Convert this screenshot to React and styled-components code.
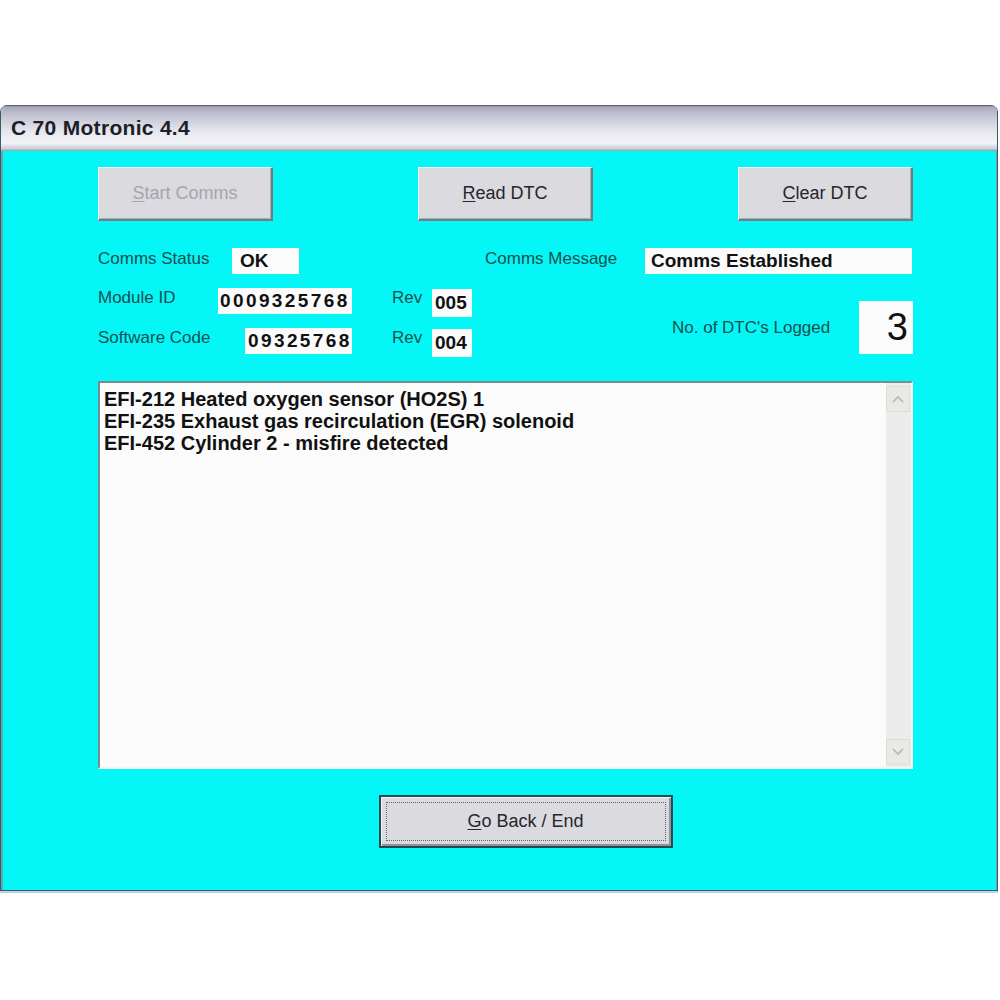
import React from "react";
import styled, { createGlobalStyle } from "styled-components";

const Global = createGlobalStyle`
  body {
    margin: 0;
    background: #ffffff;
    font-family: "Liberation Sans", Arial, sans-serif;
  }
`;

const Page = styled.div`
  width: 1000px;
  height: 1000px;
  padding-top: 105px;
  box-sizing: border-box;
`;

const Window = styled.div`
  width: 998px;
  border: 1px solid #3d5a66;
  border-top: none;
  border-radius: 7px 7px 0 0;
  box-shadow: 0 2px 0 #b9d6e4;
  overflow: hidden;
  box-sizing: border-box;
`;

const TitleBar = styled.div`
  height: 46px;
  display: flex;
  align-items: center;
  padding-left: 10px;
  background: linear-gradient(
    to bottom,
    #4e4e5a 0px,
    #a9abbe 2px,
    #c2c3d2 10px,
    #e6e6ee 26px,
    #f4f4f8 38px,
    #c8ccd4 44px,
    #8a9aa2 46px
  );
  font-weight: bold;
  font-size: 21px;
  color: #1e1e26;
  letter-spacing: 0.3px;
`;

const Body = styled.div`
  background: #05f6f6;
  border-left: 2px solid #5fa9b0;
  border-right: 1px solid #5fa9b0;
  padding: 16px 83px 42px 95px;
  display: flex;
  flex-direction: column;
`;

const ButtonRow = styled.div`
  display: flex;
  justify-content: space-between;
`;

const Button = styled.button`
  width: ${(p) => p.$w || 175}px;
  height: ${(p) => p.$h || 54}px;
  background: #dadadf;
  border: 1px solid #f4f4f6;
  border-right: 2px solid #6e7e84;
  border-bottom: 2px solid #6e7e84;
  box-shadow: inset -1px -1px 0 #a6aeb2;
  font-family: "Liberation Sans", Arial, sans-serif;
  font-size: 18px;
  color: ${(p) => (p.$disabled ? "#a4a6b0" : "#26262c")};
  padding: 0;
  cursor: default;
  u {
    text-decoration-thickness: 1px;
    text-underline-offset: 2px;
  }
`;

const FocusButton = styled(Button)`
  border: 2px solid #234a50;
  box-shadow: inset 1px 1px 0 #f4f4f6, inset -2px -2px 0 #8a969a;
  position: relative;
  &::after {
    content: "";
    position: absolute;
    inset: 5px;
    border: 1px dotted #606870;
  }
`;

const Form = styled.div`
  margin-top: 27px;
  display: flex;
`;

const LeftCol = styled.div`
  width: 388px;
  display: flex;
  flex-direction: column;
  gap: 14px;
`;

const RightCol = styled.div`
  flex: 1;
  display: flex;
  flex-direction: column;
`;

const Row = styled.div`
  display: flex;
  align-items: ${(p) => p.$align || "center"};
  height: 26px;
`;

const Label = styled.div`
  width: ${(p) => p.$w}px;
  flex: none;
  font-size: 17px;
  color: #17504f;
  margin-top: ${(p) => p.$mt || 0}px;
`;

const Field = styled.div`
  width: ${(p) => p.$w}px;
  height: ${(p) => p.$h || 26}px;
  flex: none;
  background: #fbfbfb;
  box-sizing: border-box;
  padding-left: ${(p) => p.$pl ?? 6}px;
  display: flex;
  align-items: center;
  font-weight: bold;
  font-size: 19px;
  color: #111;
  letter-spacing: ${(p) => p.$ls || 0}px;
  margin-top: ${(p) => p.$mt || 0}px;
`;

const RevLabel = styled(Label)`
  margin-left: 40px;
  align-self: flex-start;
`;

const CountRow = styled.div`
  display: flex;
  align-items: center;
  margin-top: 27px;
  padding-left: 187px;
`;

const CountField = styled.div`
  width: 54px;
  height: 53px;
  margin-left: 16px;
  background: #fbfbfb;
  display: flex;
  align-items: center;
  justify-content: flex-end;
  padding-right: 5px;
  box-sizing: border-box;
  font-size: 38px;
  color: #111;
`;

const ListBox = styled.div`
  margin-top: 27px;
  height: 388px;
  display: flex;
  background: #fbfbfb;
  border-top: 2px solid #7d8a90;
  border-left: 2px solid #7d8a90;
  border-right: 2px solid #f0f6f6;
  border-bottom: 2px solid #f0f6f6;
  box-sizing: border-box;
`;

const ListText = styled.div`
  flex: 1;
  padding: 5px 0 0 4px;
  font-weight: bold;
  font-size: 20px;
  line-height: 22px;
  color: #111;
`;

const ScrollBar = styled.div`
  width: 25px;
  background: #ececec;
  display: flex;
  flex-direction: column;
  justify-content: space-between;
  padding: 3px 1px 2px 0;
  box-sizing: border-box;
`;

const ScrollBtn = styled.div`
  height: 24px;
  background: #ebe9e6;
  border: 1px solid #e0ddd8;
  display: flex;
  align-items: center;
  justify-content: center;
`;

const Bottom = styled.div`
  margin-top: 26px;
  display: flex;
  justify-content: center;
  padding-left: 40px;
`;

const Arrow = ({ up }) => (
  <svg width="12" height="8" viewBox="0 0 12 8">
    <path
      d={up ? "M1 7 L6 2 L11 7" : "M1 1 L6 6 L11 1"}
      fill="none"
      stroke="#b8b6b0"
      strokeWidth="1.6"
    />
  </svg>
);

const App = () => (
  <Page>
    <Global />
    <Window>
      <TitleBar>C 70 Motronic 4.4</TitleBar>
      <Body>
        <ButtonRow>
          <Button $disabled>
            <u>S</u>tart Comms
          </Button>
          <Button>
            <u>R</u>ead DTC
          </Button>
          <Button>
            <u>C</u>lear DTC
          </Button>
        </ButtonRow>

        <Form>
          <LeftCol>
            <Row>
              <Label $w={134} $mt={-4}>Comms Status</Label>
              <Field $w={67} $pl={8}>OK</Field>
            </Row>
            <Row $align="flex-start">
              <Label $w={120}>Module ID</Label>
              <Field $w={134} $pl={2} $ls={2.4}>0009325768</Field>
              <RevLabel $w={40}>Rev</RevLabel>
              <Field $w={40} $h={28} $pl={3} $mt={1}>005</Field>
            </Row>
            <Row $align="flex-start">
              <Label $w={147}>Software Code</Label>
              <Field $w={107} $pl={3} $ls={2.4}>09325768</Field>
              <RevLabel $w={40}>Rev</RevLabel>
              <Field $w={40} $h={28} $pl={3} $mt={1}>004</Field>
            </Row>
          </LeftCol>
          <RightCol>
            <Row>
              <Label $w={160} $mt={-4}>Comms Message</Label>
              <Field $w={267}>Comms Established</Field>
            </Row>
            <CountRow>
              <Label $w={171}>No. of DTC's Logged</Label>
              <CountField>3</CountField>
            </CountRow>
          </RightCol>
        </Form>

        <ListBox>
          <ListText>
            <div>EFI-212 Heated oxygen sensor (HO2S) 1</div>
            <div>EFI-235 Exhaust gas recirculation (EGR) solenoid</div>
            <div>EFI-452 Cylinder 2 - misfire detected</div>
          </ListText>
          <ScrollBar>
            <ScrollBtn>
              <Arrow up />
            </ScrollBtn>
            <ScrollBtn>
              <Arrow />
            </ScrollBtn>
          </ScrollBar>
        </ListBox>

        <Bottom>
          <FocusButton $w={294} $h={53}>
            <u>G</u>o Back / End
          </FocusButton>
        </Bottom>
      </Body>
    </Window>
  </Page>
);

export default App;
